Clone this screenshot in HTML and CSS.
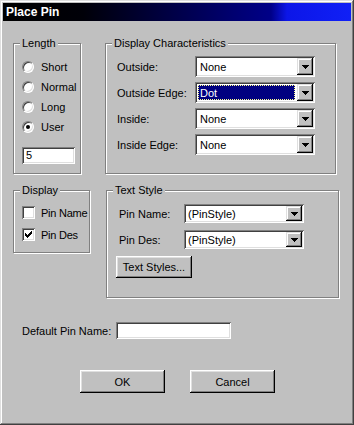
FILE: index.html
```html
<!DOCTYPE html>
<html>
<head>
<meta charset="utf-8">
<title>Place Pin</title>
<link rel="stylesheet" href="styles.css">
</head>
<body>
<div class="win">
  <div class="titlebar">Place Pin</div>
  <div class="content">
    <div class="row row-top">
      <div class="group g-length">
        <span class="legend">Length</span>
        <div class="radios">
          <div class="opt"><span class="radio"></span>Short</div>
          <div class="opt"><span class="radio"></span>Normal</div>
          <div class="opt"><span class="radio"></span>Long</div>
          <div class="opt"><span class="radio on"></span>User</div>
        </div>
        <div class="field f-len">5</div>
      </div>
      <div class="group g-dc">
        <span class="legend">Display Characteristics</span>
        <div class="frow dc-row"><span class="flabel dc-label">Outside:</span>
          <div class="combo"><span class="ctext">None</span><span class="cbtn"><svg width="7" height="4" viewBox="0 0 7 4"><rect x="0" y="0" width="7" height="1"/><rect x="1" y="1" width="5" height="1"/><rect x="2" y="2" width="3" height="1"/><rect x="3" y="3" width="1" height="1"/></svg></span></div>
        </div>
        <div class="frow dc-row"><span class="flabel dc-label">Outside Edge:</span>
          <div class="combo"><span class="ctext"><span class="sel">Dot</span></span><span class="cbtn"><svg width="7" height="4" viewBox="0 0 7 4"><rect x="0" y="0" width="7" height="1"/><rect x="1" y="1" width="5" height="1"/><rect x="2" y="2" width="3" height="1"/><rect x="3" y="3" width="1" height="1"/></svg></span></div>
        </div>
        <div class="frow dc-row"><span class="flabel dc-label">Inside:</span>
          <div class="combo"><span class="ctext">None</span><span class="cbtn"><svg width="7" height="4" viewBox="0 0 7 4"><rect x="0" y="0" width="7" height="1"/><rect x="1" y="1" width="5" height="1"/><rect x="2" y="2" width="3" height="1"/><rect x="3" y="3" width="1" height="1"/></svg></span></div>
        </div>
        <div class="frow dc-row"><span class="flabel dc-label">Inside Edge:</span>
          <div class="combo"><span class="ctext">None</span><span class="cbtn"><svg width="7" height="4" viewBox="0 0 7 4"><rect x="0" y="0" width="7" height="1"/><rect x="1" y="1" width="5" height="1"/><rect x="2" y="2" width="3" height="1"/><rect x="3" y="3" width="1" height="1"/></svg></span></div>
        </div>
      </div>
    </div>

    <div class="row row-mid">
      <div class="group g-display">
        <span class="legend">Display</span>
        <div class="copt"><span class="check"></span>Pin Name</div>
        <div class="copt copt2"><span class="check"><svg width="7" height="7" viewBox="0 0 7 7"><rect x="6" y="0" width="1" height="1"/><rect x="5" y="1" width="2" height="1"/><rect x="0" y="2" width="1" height="1"/><rect x="4" y="2" width="3" height="1"/><rect x="0" y="3" width="2" height="1"/><rect x="3" y="3" width="3" height="1"/><rect x="0" y="4" width="5" height="1"/><rect x="1" y="5" width="3" height="1"/><rect x="2" y="6" width="1" height="1"/></svg></span>Pin Des</div>
      </div>
      <div class="group g-ts">
        <span class="legend">Text Style</span>
        <div class="frow ts-row"><span class="flabel ts-label">Pin Name:</span>
          <div class="combo combo-sm"><span class="ctext">(PinStyle)</span><span class="cbtn"><svg width="7" height="4" viewBox="0 0 7 4"><rect x="0" y="0" width="7" height="1"/><rect x="1" y="1" width="5" height="1"/><rect x="2" y="2" width="3" height="1"/><rect x="3" y="3" width="1" height="1"/></svg></span></div>
        </div>
        <div class="frow ts-row"><span class="flabel ts-label">Pin Des:</span>
          <div class="combo combo-sm"><span class="ctext">(PinStyle)</span><span class="cbtn"><svg width="7" height="4" viewBox="0 0 7 4"><rect x="0" y="0" width="7" height="1"/><rect x="1" y="1" width="5" height="1"/><rect x="2" y="2" width="3" height="1"/><rect x="3" y="3" width="1" height="1"/></svg></span></div>
        </div>
        <div class="btn btn-styles">Text Styles...</div>
      </div>
    </div>

    <div class="row row-name">
      <span class="name-label">Default Pin Name:</span>
      <div class="field f-name"></div>
    </div>

    <div class="row row-btns">
      <div class="btn btn-ok">OK</div>
      <div class="btn btn-cancel">Cancel</div>
    </div>
  </div>
</div>
</body>
</html>
```

FILE: styles.css
```css
html, body {
  margin: 0;
  padding: 0;
  background: #c0c0c0;
}

body {
  font-family: "Liberation Sans", Arial, sans-serif;
  font-size: 11px;
  color: #000;
}

.win {
  width: 354px;
  height: 425px;
  box-sizing: border-box;
  padding: 3px;
  background: #c0c0c0;
  box-shadow: inset -1px -1px 0 #404040, inset 1px 1px 0 #dfdfdf,
              inset -2px -2px 0 #808080, inset 2px 2px 0 #ffffff;
}

.titlebar {
  height: 18px;
  line-height: 19px;
  padding-left: 3px;
  color: #fff;
  font-weight: bold;
  font-size: 12px;
  background: linear-gradient(to right, #000000 0px, #000008 80px, #000070 230px, #000088 268px, #0c16e8 284px, #1020f6 348px);
}

.content {
  display: flex;
  flex-direction: column;
}

.row {
  display: flex;
  align-items: flex-start;
}

.row-top {
  margin-top: 22px;
  padding-left: 10px;
}

.group {
  position: relative;
  box-sizing: border-box;
  border: 1px solid #808080;
  box-shadow: inset 1px 1px 0 #ffffff, 1px 1px 0 #ffffff;
}

.legend {
  position: absolute;
  top: -7px;
  left: 6px;
  padding: 0 2px;
  line-height: 13px;
  background: #c0c0c0;
  white-space: nowrap;
}

/* Length */
.g-length {
  width: 68px;
  height: 131px;
  padding: 13px 0 0 8px;
}

.radios {
  display: flex;
  flex-direction: column;
}

.opt {
  display: flex;
  align-items: center;
  height: 20px;
  gap: 7px;
}

.radio {
  width: 12px;
  height: 12px;
  box-sizing: border-box;
  border-radius: 50%;
  background: #fff;
  border: 1px solid;
  border-color: #808080 #ffffff #ffffff #808080;
  box-shadow: inset 1px 1px 0 #404040, inset -1px -1px 0 #dfdfdf;
  display: flex;
  align-items: center;
  justify-content: center;
}

.radio.on::after {
  content: "";
  width: 4px;
  height: 4px;
  border-radius: 50%;
  background: #000;
}

.field {
  box-sizing: border-box;
  background: #fff;
  box-shadow: inset 1px 1px 0 #808080, inset -1px -1px 0 #ffffff,
              inset 2px 2px 0 #404040, inset -2px -2px 0 #dfdfdf;
}

.f-len {
  margin-top: 10px;
  width: 53px;
  height: 17px;
  line-height: 17px;
  padding-left: 4px;
}

/* Display characteristics */
.g-dc {
  margin-left: 24px;
  width: 231px;
  height: 131px;
  padding: 12px 0 0 11px;
}

.frow {
  display: flex;
  align-items: center;
}

.dc-row {
  height: 21px;
  margin-bottom: 5px;
}

.dc-label {
  width: 78px;
}

.combo {
  box-sizing: border-box;
  width: 120px;
  height: 21px;
  padding: 2px;
  display: flex;
  background: #fff;
  box-shadow: inset 1px 1px 0 #808080, inset -1px -1px 0 #ffffff,
              inset 2px 2px 0 #404040, inset -2px -2px 0 #dfdfdf;
}

.combo-sm {
  height: 19px;
}

.ctext {
  flex: 1;
  display: flex;
  align-items: center;
  padding-left: 3px;
  white-space: nowrap;
}

.combo-sm .ctext {
  padding-left: 2px;
}

.sel {
  display: flex;
  align-items: center;
  align-self: stretch;
  flex: 1;
  margin: 1px 2px 1px -2px;
  padding-left: 2px;
  background: #000080;
  color: #fff;
  outline: 1px dotted #ffff90;
  outline-offset: -1px;
}

.cbtn {
  width: 16px;
  background: #c0c0c0;
  display: flex;
  align-items: center;
  justify-content: center;
  box-shadow: inset -1px -1px 0 #000000, inset 1px 1px 0 #dfdfdf,
              inset -2px -2px 0 #808080, inset 2px 2px 0 #ffffff;
}

.cbtn svg {
  fill: #000;
  display: block;
}

/* Row 2 */
.row-mid {
  margin-top: 16px;
  padding-left: 10px;
}

.g-display {
  width: 77px;
  height: 63px;
  padding: 15px 0 0 8px;
}

.copt {
  display: flex;
  align-items: center;
  height: 13px;
  gap: 6px;
  white-space: nowrap;
  letter-spacing: -0.25px;
}

.copt2 {
  margin-top: 9px;
}

.check {
  width: 13px;
  height: 13px;
  box-sizing: border-box;
  background: #fff;
  box-shadow: inset 1px 1px 0 #808080, inset -1px -1px 0 #ffffff,
              inset 2px 2px 0 #404040, inset -2px -2px 0 #dfdfdf;
  display: flex;
  align-items: center;
  justify-content: center;
}

.check svg {
  fill: #000;
  display: block;
}

.g-ts {
  margin-left: 16px;
  width: 233px;
  height: 108px;
  padding: 13px 0 0 12px;
}

.ts-row {
  height: 19px;
  margin-bottom: 7px;
}

.ts-label {
  width: 65px;
}

.btn {
  box-sizing: border-box;
  display: flex;
  align-items: center;
  justify-content: center;
  background: #c0c0c0;
  box-shadow: inset -1px -1px 0 #000000, inset 1px 1px 0 #ffffff,
              inset -2px -2px 0 #808080, inset 2px 2px 0 #dfdfdf;
  white-space: nowrap;
}

.btn-styles {
  margin-top: 5px;
  margin-left: -3px;
  width: 76px;
  height: 22px;
}

/* Row 3 */
.row-name {
  margin-top: 24px;
  padding-left: 19px;
  align-items: center;
}

.name-label {
  width: 94px;
  white-space: nowrap;
  padding-top: 1px;
}

.f-name {
  width: 115px;
  height: 17px;
}

/* Row 4 */
.row-btns {
  margin-top: 31px;
}

.btn-ok {
  margin-left: 77px;
  width: 85px;
  height: 23px;
}

.btn-cancel {
  margin-left: 25px;
  width: 85px;
  height: 23px;
}
```
